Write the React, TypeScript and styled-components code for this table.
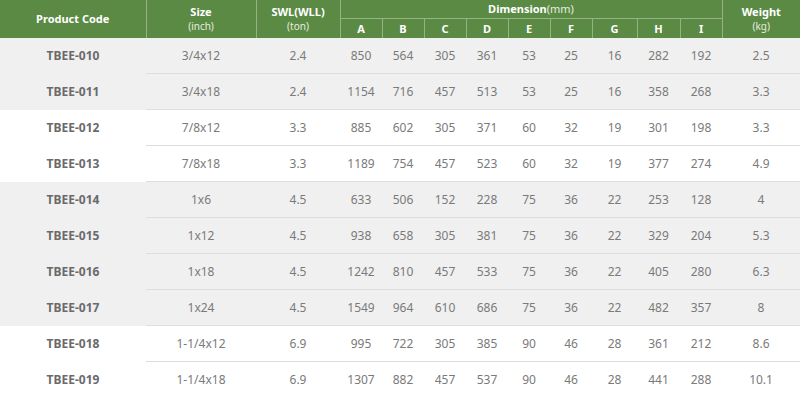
import React from 'react'
import styled, { createGlobalStyle } from 'styled-components'

const GlobalStyle = createGlobalStyle`
  html, body {
    margin: 0;
    padding: 0;
    background: #ffffff;
  }
  body {
    font-family: "Noto Sans", "Open Sans", Arial, sans-serif;
  }
`

const Table = styled.table`
  width: 800px;
  table-layout: fixed;
  border-collapse: collapse;
  border-spacing: 0;
  font-size: 12px;
`

const HeadCell = styled.th<{ $last?: boolean; $split?: boolean }>`
  background: #5b8a45;
  color: #ffffff;
  font-weight: 700;
  font-size: 11px;
  line-height: 14px;
  padding: 0;
  text-align: center;
  vertical-align: middle;
  border-right: ${p => (p.$last ? 'none' : '1px solid #93b482')};
  border-bottom: ${p => (p.$split ? '1px solid #93b482' : 'none')};
  height: 18px;
`

const Sub = styled.span`
  display: block;
  font-weight: 400;
  font-size: 10px;
  line-height: 14px;
  color: #e4eedd;
`

const Unit = styled.span`
  font-weight: 400;
  color: #e4eedd;
`

const Row = styled.tr<{ $shade: boolean }>`
  background: ${p => (p.$shade ? '#f0f0f0' : '#ffffff')};
`

const Cell = styled.td<{ $line: boolean }>`
  height: 35px;
  padding: 0;
  text-align: center;
  vertical-align: middle;
  color: #7a7a7a;
  font-size: 12px;
  border-bottom: ${p => (p.$line ? '1px solid #dedede' : 'none')};
`

const CodeCell = styled.td`
  height: 35px;
  padding: 0;
  text-align: center;
  vertical-align: middle;
  color: #6a6a6a;
  font-weight: 700;
  font-size: 12px;
`

const widths = [146, 110, 84, 42, 42, 42, 42, 42, 42, 45, 43, 42, 78]
const letters = ['A', 'B', 'C', 'D', 'E', 'F', 'G', 'H', 'I']

type Item = { code: string; size: string; swl: string; dims: number[]; weight: string; shade: boolean }

const items: Item[] = [
  { code: 'TBEE-010', size: '3/4x12', swl: '2.4', dims: [850, 564, 305, 361, 53, 25, 16, 282, 192], weight: '2.5', shade: true },
  { code: 'TBEE-011', size: '3/4x18', swl: '2.4', dims: [1154, 716, 457, 513, 53, 25, 16, 358, 268], weight: '3.3', shade: true },
  { code: 'TBEE-012', size: '7/8x12', swl: '3.3', dims: [885, 602, 305, 371, 60, 32, 19, 301, 198], weight: '3.3', shade: false },
  { code: 'TBEE-013', size: '7/8x18', swl: '3.3', dims: [1189, 754, 457, 523, 60, 32, 19, 377, 274], weight: '4.9', shade: false },
  { code: 'TBEE-014', size: '1x6', swl: '4.5', dims: [633, 506, 152, 228, 75, 36, 22, 253, 128], weight: '4', shade: true },
  { code: 'TBEE-015', size: '1x12', swl: '4.5', dims: [938, 658, 305, 381, 75, 36, 22, 329, 204], weight: '5.3', shade: true },
  { code: 'TBEE-016', size: '1x18', swl: '4.5', dims: [1242, 810, 457, 533, 75, 36, 22, 405, 280], weight: '6.3', shade: true },
  { code: 'TBEE-017', size: '1x24', swl: '4.5', dims: [1549, 964, 610, 686, 75, 36, 22, 482, 357], weight: '8', shade: true },
  { code: 'TBEE-018', size: '1-1/4x12', swl: '6.9', dims: [995, 722, 305, 385, 90, 46, 28, 361, 212], weight: '8.6', shade: false },
  { code: 'TBEE-019', size: '1-1/4x18', swl: '6.9', dims: [1307, 882, 457, 537, 90, 46, 28, 441, 288], weight: '10.1', shade: false },
]

export default function App() {
  return (
    <>
      <GlobalStyle />
      <Table>
        <colgroup>
          {widths.map((w, i) => (
            <col key={i} style={{ width: w }} />
          ))}
        </colgroup>
        <thead>
          <tr>
            <HeadCell rowSpan={2}>Product Code</HeadCell>
            <HeadCell rowSpan={2}>
              Size<Sub>(inch)</Sub>
            </HeadCell>
            <HeadCell rowSpan={2}>
              SWL(WLL)<Sub>(ton)</Sub>
            </HeadCell>
            <HeadCell colSpan={9} $split>
              Dimension<Unit>(mm)</Unit>
            </HeadCell>
            <HeadCell rowSpan={2} $last>
              Weight<Sub>(kg)</Sub>
            </HeadCell>
          </tr>
          <tr>
            {letters.map(l => (
              <HeadCell key={l} style={{ height: 19 }}>
                {l}
              </HeadCell>
            ))}
          </tr>
        </thead>
        <tbody>
          {items.map((it, i) => {
            const line = i < items.length - 1
            return (
              <Row key={it.code} $shade={it.shade}>
                <CodeCell>{it.code}</CodeCell>
                <Cell $line={line}>{it.size}</Cell>
                <Cell $line={line}>{it.swl}</Cell>
                {it.dims.map((d, j) => (
                  <Cell key={j} $line={line}>
                    {d}
                  </Cell>
                ))}
                <Cell $line={line}>{it.weight}</Cell>
              </Row>
            )
          })}
        </tbody>
      </Table>
    </>
  )
}
